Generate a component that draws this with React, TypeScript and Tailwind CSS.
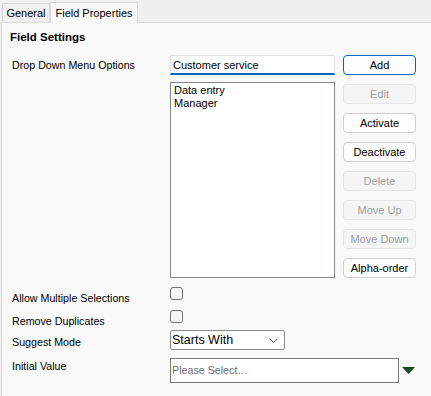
import { useState } from 'react'

const font = "font-['Liberation_Sans',Arial,sans-serif]"

interface Btn {
  label: string
  disabled?: boolean
  primary?: boolean
}

const buttons: Btn[] = [
  { label: 'Add', primary: true },
  { label: 'Edit', disabled: true },
  { label: 'Activate' },
  { label: 'Deactivate' },
  { label: 'Delete', disabled: true },
  { label: 'Move Up', disabled: true },
  { label: 'Move Down', disabled: true },
  { label: 'Alpha-order' },
]

function ActionButton({ label, disabled, primary }: Btn): JSX.Element {
  let cls =
    'h-[20px] w-[73px] rounded-[4px] border text-[11px] leading-[18px] text-center '
  if (disabled) cls += 'border-[#e5e5e5] bg-[#f5f5f5] text-[#9d9d9d]'
  else if (primary) cls += 'border-[#0067c0] bg-[#fdfdfd] text-black'
  else cls += 'border-[#d0d0d0] bg-[#fdfdfd] text-black'
  return (
    <button type="button" className={cls} disabled={disabled}>
      {label}
    </button>
  )
}

export default function App(): JSX.Element {
  const [option, setOption] = useState('Customer service')

  return (
    <div className={`h-[396px] w-[431px] bg-[#f0f0f0] text-black ${font}`}>
      {/* tabs */}
      <div className="flex h-[22px] items-end pl-[2px]">
        <div className="flex h-[19px] w-[48px] items-center justify-center border border-b-0 border-[#d9d9d9] bg-[#f0f0f0] text-[11px]">
          General
        </div>
        <div className="relative -mb-px flex h-[21px] w-[88px] items-center justify-center border border-b-0 border-[#d9d9d9] bg-[#f9f9f9] text-[11px]">
          Field Properties
        </div>
      </div>

      {/* panel */}
      <div className="ml-px h-[374px] border-t border-l border-[#d9d9d9] bg-[#f9f9f9] pt-[7px] text-[10.7px]">
        <div className="pl-[8px] text-[11.5px] leading-[15px] font-bold">Field Settings</div>

        <div className="mt-[10px] flex">
          <div className="w-[168px] shrink-0 pl-[10px] pt-[3px] leading-[14px]">Drop Down Menu Options</div>
          <div className="flex w-[165px] shrink-0 flex-col">
            <input
              value={option}
              onChange={(e) => setOption(e.target.value)}
              className="h-[20px] w-full border border-b-2 border-[#e3e3e3] border-b-[#0067c0] bg-white px-[2px] text-[11px] outline-none"
            />
            <div className="mt-[7px] h-[196px] border border-[#828790] bg-white px-[3px] pt-px text-[11px] leading-[13px]">
              <div>Data entry</div>
              <div>Manager</div>
            </div>
          </div>
          <div className="ml-[8px] flex flex-col gap-[9px]">
            {buttons.map((b) => (
              <ActionButton key={b.label} {...b} />
            ))}
          </div>
        </div>

        <div className="mt-[9px] flex h-[13px] items-start">
          <div className="w-[168px] shrink-0 pl-[10px] pt-[4px] leading-[14px]">Allow Multiple Selections</div>
          <div className="h-[13px] w-[13px] rounded-[3px] border border-[#707070] bg-[#f6f6f6]" />
        </div>
        <div className="mt-[10px] flex h-[13px] items-start">
          <div className="w-[168px] shrink-0 pl-[10px] pt-[4px] leading-[14px]">Remove Duplicates</div>
          <div className="h-[13px] w-[13px] rounded-[3px] border border-[#707070] bg-[#f6f6f6]" />
        </div>
        <div className="mt-[7px] flex h-[20px] items-start">
          <div className="w-[168px] shrink-0 pl-[10px] pt-[5px] leading-[14px]">Suggest Mode</div>
          <div className="flex h-[20px] w-[115px] items-center justify-between rounded-[2px] border border-[#8a8a8a] bg-white pl-[1px] pr-[6px] text-[12.5px]">
            <span>Starts With</span>
            <svg width="9" height="5" viewBox="0 0 9 5" fill="none">
              <path d="M0.5 0.5 L4.5 4.5 L8.5 0.5" stroke="#555" strokeWidth="1" />
            </svg>
          </div>
        </div>
        <div className="mt-[8px] flex h-[25px] items-start">
          <div className="w-[168px] shrink-0 pl-[10px] pt-px leading-[14px]">Initial Value</div>
          <div className="flex h-[25px] w-[229px] items-center border border-[#7a7a7a] bg-white pl-[1px] text-[10.7px] text-[#6d6d6d]">
            Please Select…
          </div>
          <svg className="ml-[3px] mt-[9px]" width="13" height="7" viewBox="0 0 13 7">
            <polygon points="0,0 13,0 6.5,7" fill="#1e4a22" />
          </svg>
        </div>
      </div>
    </div>
  )
}
